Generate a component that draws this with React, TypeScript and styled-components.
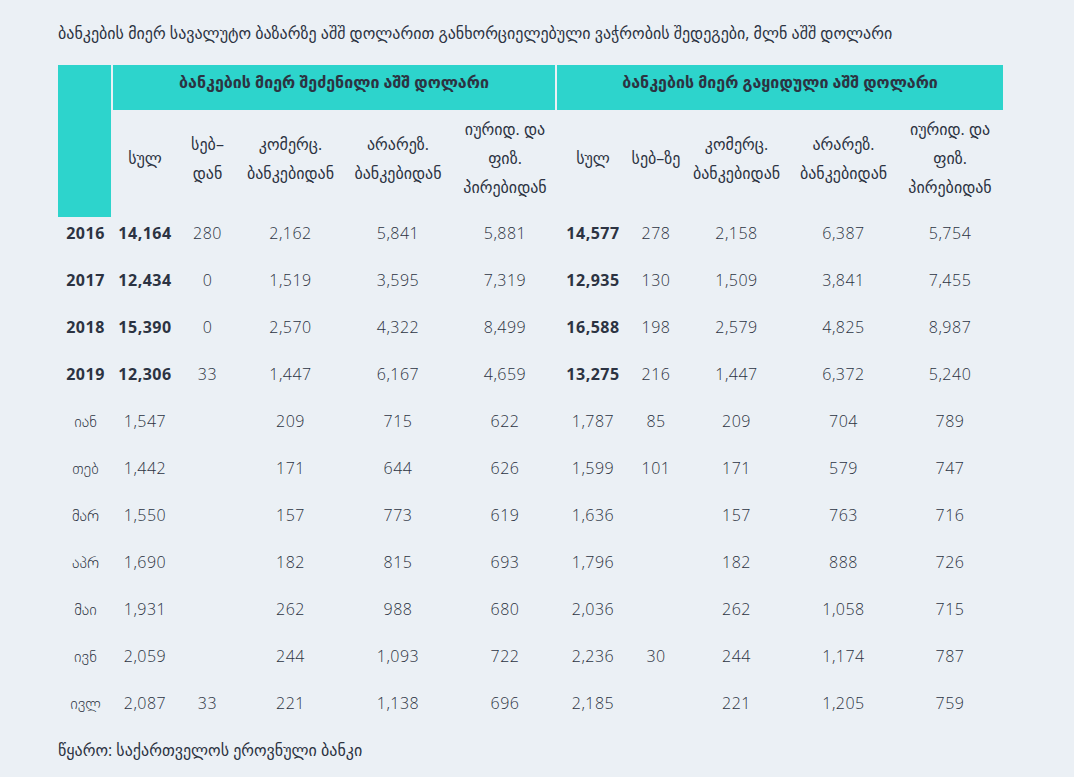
import React from 'react';
import styled, { createGlobalStyle } from 'styled-components';

const GlobalStyle = createGlobalStyle`
	html, body {
		margin: 0;
		padding: 0;
		background: #ebf0f5;
	}
	body {
		font-family: "Open Sans", "DejaVu Sans", sans-serif;
		color: #2c3342;
	}
`;

const Page = styled.div`
	width: 1074px;
	height: 777px;
	padding: 22px 0 0 58px;
	box-sizing: border-box;
	background: #ebf0f5;
`;

const Title = styled.div`
	font-size: 16px;
	line-height: 22px;
	height: 43px;
	color: #2c3342;
`;

const Table = styled.table`
	border-collapse: separate;
	border-spacing: 0;
	table-layout: fixed;
	width: 945px;
	font-size: 16px;
`;

const YearHead = styled.th`
	background: #2dd4cc;
	border-right: 2px solid #ebf0f5;
`;

const GroupHead = styled.th<{ $last?: boolean }>`
	background: #2dd4cc;
	height: 45px;
	box-sizing: border-box;
	padding: 2px 0 13px;
	line-height: 29px;
	font-weight: 700;
	font-size: 16px;
	vertical-align: middle;
	color: #2c3342;
	border-right: ${(p) => (p.$last ? 'none' : '2px solid #ebf0f5')};
`;

const SubHead = styled.th`
	font-weight: 400;
	font-size: 16px;
	line-height: 29px;
	height: 107px;
	box-sizing: border-box;
	padding: 4px 2px 14px;
	vertical-align: middle;
	color: #2c3342;
	white-space: nowrap;
`;

const Cell = styled.td<{ $bold?: boolean }>`
	text-align: center;
	height: 47px;
	box-sizing: border-box;
	padding: 2px 0 16px;
	line-height: 29px;
	letter-spacing: 0.5px;
	font-weight: ${(p) => (p.$bold ? 700 : 300)};
	color: #2c3342;
`;

const MonthCell = styled(Cell)`
	letter-spacing: 0;
`;

const Source = styled.div`
	font-size: 16px;
	margin-top: 5px;
	color: #2c3342;
`;

const widths = [55, 64, 61, 105, 110, 104, 72, 54, 107, 107, 106];

const rows: { label: string; bold?: boolean; v: string[] }[] = [
	{ label: '2016', bold: true, v: ['14,164', '280', '2,162', '5,841', '5,881', '14,577', '278', '2,158', '6,387', '5,754'] },
	{ label: '2017', bold: true, v: ['12,434', '0', '1,519', '3,595', '7,319', '12,935', '130', '1,509', '3,841', '7,455'] },
	{ label: '2018', bold: true, v: ['15,390', '0', '2,570', '4,322', '8,499', '16,588', '198', '2,579', '4,825', '8,987'] },
	{ label: '2019', bold: true, v: ['12,306', '33', '1,447', '6,167', '4,659', '13,275', '216', '1,447', '6,372', '5,240'] },
	{ label: 'იან', v: ['1,547', '', '209', '715', '622', '1,787', '85', '209', '704', '789'] },
	{ label: 'თებ', v: ['1,442', '', '171', '644', '626', '1,599', '101', '171', '579', '747'] },
	{ label: 'მარ', v: ['1,550', '', '157', '773', '619', '1,636', '', '157', '763', '716'] },
	{ label: 'აპრ', v: ['1,690', '', '182', '815', '693', '1,796', '', '182', '888', '726'] },
	{ label: 'მაი', v: ['1,931', '', '262', '988', '680', '2,036', '', '262', '1,058', '715'] },
	{ label: 'ივნ', v: ['2,059', '', '244', '1,093', '722', '2,236', '30', '244', '1,174', '787'] },
	{ label: 'ივლ', v: ['2,087', '33', '221', '1,138', '696', '2,185', '', '221', '1,205', '759'] },
];

const subHeads = [
	['სულ'],
	['სებ–', 'დან'],
	['კომერც.', 'ბანკებიდან'],
	['არარეზ.', 'ბანკებიდან'],
	['იურიდ. და', 'ფიზ.', 'პირებიდან'],
	['სულ'],
	['სებ–ზე'],
	['კომერც.', 'ბანკებიდან'],
	['არარეზ.', 'ბანკებიდან'],
	['იურიდ. და', 'ფიზ.', 'პირებიდან'],
];

export default function App() {
	return (
		<Page>
			<GlobalStyle />
			<Title>ბანკების მიერ სავალუტო ბაზარზე აშშ დოლარით განხორციელებული ვაჭრობის შედეგები, მლნ აშშ დოლარი</Title>
			<Table>
				<colgroup>
					{widths.map((w, i) => (
						<col key={i} style={{ width: w }} />
					))}
				</colgroup>
				<thead>
					<tr>
						<YearHead rowSpan={2} />
						<GroupHead colSpan={5}>ბანკების მიერ შეძენილი აშშ დოლარი</GroupHead>
						<GroupHead colSpan={5} $last>
							ბანკების მიერ გაყიდული აშშ დოლარი
						</GroupHead>
					</tr>
					<tr>
						{subHeads.map((lines, i) => (
							<SubHead key={i}>
								{lines.map((l, j) => (
									<div key={j}>{l}</div>
								))}
							</SubHead>
						))}
					</tr>
				</thead>
				<tbody>
					{rows.map((r) => (
						<tr key={r.label}>
							{r.bold ? <Cell $bold>{r.label}</Cell> : <MonthCell>{r.label}</MonthCell>}
							{r.v.map((x, i) => (
								<Cell key={i} $bold={r.bold && (i === 0 || i === 5)}>
									{x}
								</Cell>
							))}
						</tr>
					))}
				</tbody>
			</Table>
			<Source>წყარო: საქართველოს ეროვნული ბანკი</Source>
		</Page>
	);
}
